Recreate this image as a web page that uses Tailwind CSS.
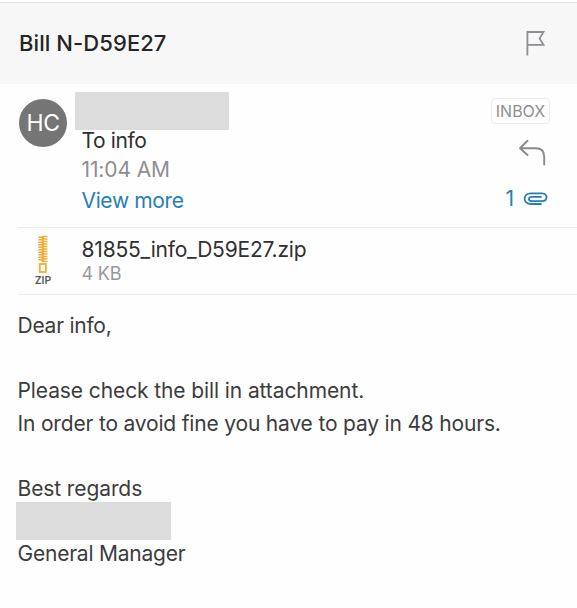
<!DOCTYPE html>
<html lang="en">
<head>
<meta charset="utf-8">
<title>Bill N-D59E27</title>
<script src="https://cdn.jsdelivr.net/npm/@tailwindcss/browser@4"></script>
</head>
<body class="bg-[#fefefe] font-['Inter','Liberation_Sans',sans-serif] text-[#3c3c3d] w-[577px] h-[608px] overflow-hidden whitespace-nowrap">
<header class="mt-[2px] h-[82px] bg-[#f7f7f7] border-t border-[#e2e2e2] flex items-center justify-between pl-[19px] pr-[31px]">
  <h1 class="-mt-[1px] text-[22px] font-medium leading-7 tracking-[0.08px] text-[#252526]">Bill N-D59E27</h1>
  <svg class="-mt-[2px] w-[22px] h-[28px]" viewBox="0 0 22 28" fill="none" stroke="#8e8e93" stroke-width="1.8"><path d="M3.4 26.5V3H19.5L15.6 9.4L19.5 15.8H3.4"/></svg>
</header>
<section class="mt-[1px] h-[142px] flex pl-[19px]">
  <div class="mt-[14px] size-12 rounded-full bg-[#757575] text-white text-[23px] flex items-center justify-center shrink-0 tracking-[-0.4px] pt-[1px]">HC</div>
  <div class="pt-[7px] pl-2 w-[300px]">
    <div class="w-[154px] h-[38px] bg-[#dcdcdc]"></div>
    <div class="pl-[6.5px] text-[21px] pt-[1px]">
      <p class="leading-5 tracking-[-0.4px] text-[#303031]">To info</p>
      <p class="leading-[37px] tracking-[-0.12px] text-[#8e8e90]">11:04 AM</p>
      <p class="leading-[25px] tracking-[-0.35px] text-[#257eb7]">View more</p>
    </div>
  </div>
  <div class="ml-auto pr-[27px] flex flex-col items-end">
    <span class="mt-[13px] h-[26px] w-[59px] rounded-[4px] border border-[#ededed] text-[#8e8e90] text-[16px] flex items-center justify-center">INBOX</span>
    <svg class="mt-[15px] mr-[4px] w-[28px] h-[28px]" viewBox="0 0 28 28" fill="none" stroke="#8a8a8a" stroke-width="1.9" stroke-linecap="round" stroke-linejoin="round"><path d="M9.5 1.8L2 9.2L9.5 16M2 9.2H17.5Q26.2 9.2 26.2 17.5V25.5"/></svg>
    <div class="mt-[20px] flex items-center gap-[9px] text-[#257eb7] text-[21px] leading-6">
      <span>1</span>
      <svg class="mr-[2px] w-[25px] h-[14px]" viewBox="0 0 25 14" fill="none" stroke="#257eb7" stroke-width="1.8" stroke-linecap="round"><path d="M18 12H8C-.6 12 -.4 1.3 8 1.3H19.2C25 1.3 25 9.2 19 9.2H8.8C5 9.2 5 4.9 8.8 4.9H18"/></svg>
    </div>
  </div>
</section>
<section class="ml-[18px] h-[68px] border-y border-[#ebebeb] flex">
  <div class="w-[50px] pt-[7px] flex flex-col items-center">
    <svg class="w-[12px] h-[39px]" viewBox="0 0 12 39" fill="none" stroke="#efac38"><path d="M3.8 1.5V26" stroke-width="5" stroke-dasharray="1.6 .9"/><path d="M8 .7V27" stroke-width="5" stroke-dasharray="1.6 .9"/><path d="M5.8 1V27" stroke-width="2.2"/><rect x="2.8" y="29" width="6" height="8" stroke-width="1.8"/></svg>
    <span class="mt-[1px] text-[10.5px] leading-3 font-semibold text-[#5b5b5b]">ZIP</span>
  </div>
  <div class="pl-[13.5px] pt-[8px]">
    <p class="text-[21px] leading-7 tracking-[-0.2px] text-[#303031]">81855_info_D59E27.zip</p>
    <p class="text-[18px] leading-[19px] tracking-[-0.2px] text-[#98989a]">4 KB</p>
  </div>
</section>
<main class="pl-[17.5px] pt-[15px] text-[21px] leading-[32.5px] tracking-[-0.14px]">
  <p class="tracking-[-0.25px]">Dear info,</p>
  <p class="mt-[32.5px]"><span class="tracking-[-0.1px]">Please check the bill in attachment.</span><br><span class="tracking-[-0.18px]">In order to avoid fine you have to pay in 48 hours.</span></p>
  <p class="mt-[32.5px] tracking-[-0.1px]">Best regards</p>
  <div class="-ml-[2px] -mt-[3px] w-[155px] h-[38px] bg-[#dcdcdc]"></div>
  <p class="-mt-[2.5px] tracking-[-0.22px]">General Manager</p>
</main>
</body>
</html>
